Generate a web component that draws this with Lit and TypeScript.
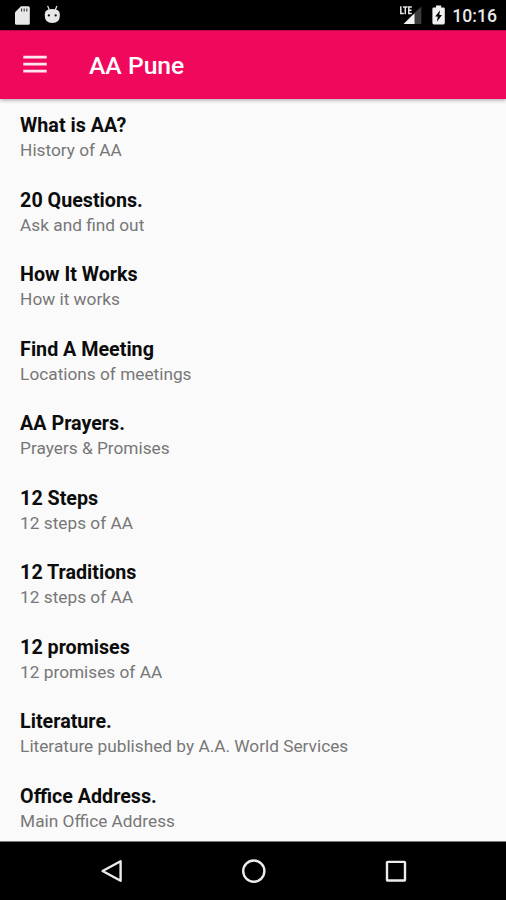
import { LitElement, html, css, svg } from "lit";
import { customElement } from "lit/decorators.js";

const ITEMS: [string, string][] = [
  ["What is AA?", "History of AA"],
  ["20 Questions.", "Ask and find out"],
  ["How It Works", "How it works"],
  ["Find A Meeting", "Locations of meetings"],
  ["AA Prayers.", "Prayers & Promises"],
  ["12 Steps", "12 steps of AA"],
  ["12 Traditions", "12 steps of AA"],
  ["12 promises", "12 promises of AA"],
  ["Literature.", "Literature published by A.A. World Services"],
  ["Office Address.", "Main Office Address"],
];

@customElement("status-bar")
export class StatusBar extends LitElement {
  static styles = css`
    :host {
      display: flex;
      align-items: center;
      height: 30px;
      background: #000;
      color: #e8e8e8;
      padding: 0 9px 0 14px;
      box-sizing: border-box;
    }
    svg { display: block; }
    .sd { margin-right: 13px; }
    .signal { margin-left: auto; margin-right: 10px; }
    .battery { margin-right: 7px; }
    .time { font-size: 17.6px; line-height: 30px; font-weight: 500; padding-top: 2px; }
  `;
  render() {
    return html`
      <svg class="sd" width="17" height="30" viewBox="0 0 17 30">
        <path fill="#e8e8e8" d="M7 6.3h7.3q1.5 0 1.5 1.5v15.4q0 1.5-1.5 1.5H2.6q-1.6 0-1.6-1.5V12.3z" />
        <path stroke="#333" stroke-width="1.1" d="M7.6 8.6v3M10.2 8.6v3M12.8 8.6v3" />
      </svg>
      <svg width="17" height="30" viewBox="0 0 17 30">
        <path stroke="#e8e8e8" stroke-width="1.2" stroke-linecap="round" d="M3.8 6.3l1.5 3.4M12.8 6.3l-1.5 3.4" />
        <path fill="#e8e8e8" d="M.8 14.2q0-1.6 1-3Q3.6 9 8.3 9t6.5 2.2q1 1.4 1 3v1.6Q15.8 23 8.3 23T.8 15.8z" />
        <circle cx="4.9" cy="15.4" r="1.15" fill="#111" />
        <circle cx="11.7" cy="15.4" r="1.15" fill="#111" />
      </svg>
      <svg class="signal" width="23" height="30" viewBox="0 0 23 30">
        <path fill="#3d3d3d" d="M22.3 6.5V24h-18l9-9h2V13z" />
        <path fill="#f2f2f2" d="M15.5 13.3V24H4.6z" />
        <path fill="none" stroke="#e8e8e8" stroke-width="1.5" d="M1.8 6.3v7.2h3M4 7h4.6M6.3 7v7.2M12.8 7H9.8v6.5h3M9.8 10.2h2.8" />
      </svg>
      <svg class="battery" width="13" height="30" viewBox="0 0 13 30">
        <path fill="#f0f0f0" d="M4 5.6h5.2v1.8h2.2q1.4 0 1.4 1.4v14q0 1.6-1.4 1.6H1.8q-1.4 0-1.4-1.6v-14q0-1.4 1.4-1.4H4z" />
        <path fill="#000" d="M8.1 10.2L3.2 16.4h2.6l-.9 5.3 5.1-6.6H7.3z" />
      </svg>
      <span class="time">10:16</span>
    `;
  }
}

@customElement("app-bar")
export class AppBar extends LitElement {
  static styles = css`
    :host {
      display: flex;
      align-items: center;
      position: relative;
      height: 69px;
      box-sizing: border-box;
      padding-left: 23px;
      background: #f0085c;
      border-top: 1px solid #b90546;
      box-shadow: 0 1px 4px rgba(0, 0, 0, 0.36);
      color: #fff;
    }
    .menu { display: block; margin-right: 42px; }
    .title { font-size: 24.7px; line-height: 32px; font-weight: 500; padding-top: 1px; }
  `;
  render() {
    return html`
      <svg class="menu" width="24" height="20" viewBox="0 0 24 20">
        <path stroke="#fff" stroke-opacity=".9" stroke-width="2.8" d="M.3 2.2h23.4M.3 9.1h23.4M.3 16.1h23.4" />
      </svg>
      <span class="title">AA Pune</span>
    `;
  }
}

@customElement("nav-bar")
export class NavBar extends LitElement {
  static styles = css`
    :host {
      display: flex;
      justify-content: space-between;
      align-items: center;
      height: 59px;
      box-sizing: border-box;
      border-top: 1px solid #777;
      padding: 0 98px 0 100px;
      background: #000;
    }
    svg { display: block; fill: none; stroke: #ececec; stroke-width: 2.4; }
  `;
  icon(shape: unknown) {
    return html`<svg width="24" height="26" viewBox="0 0 24 26">${shape}</svg>`;
  }
  render() {
    return html`
      ${this.icon(svg`<path stroke-linejoin="round" d="M20.6 3.2v19.6L2.6 13z" />`)}
      ${this.icon(svg`<circle cx="11.8" cy="13.1" r="10.6" />`)}
      ${this.icon(svg`<rect x="3" y="3.9" width="18" height="18.6" rx=".6" />`)}
    `;
  }
}

@customElement("app-root")
export class AppRoot extends LitElement {
  static styles = css`
    :host {
      display: flex;
      flex-direction: column;
      height: 900px;
      overflow: hidden;
      background: #fafafa;
      font-family: Roboto, "Liberation Sans", sans-serif;
    }
    .list {
      flex: 1;
      min-height: 0;
      overflow: hidden;
      margin: 0;
      padding: 14.1px 20.1px 0;
      list-style: none;
    }
    .item { height: 74.55px; }
    .name { font-size: 19.7px; line-height: 25px; font-weight: 700; color: #0c0c0c; }
    .detail { font-size: 17.25px; line-height: 24px; color: #777; }
  `;
  render() {
    return html`
      <status-bar></status-bar>
      <app-bar></app-bar>
      <ul class="list">
        ${ITEMS.map(
          ([name, detail]) => html`<li class="item">
            <div class="name">${name}</div>
            <div class="detail">${detail}</div>
          </li>`
        )}
      </ul>
      <nav-bar></nav-bar>
    `;
  }
}
